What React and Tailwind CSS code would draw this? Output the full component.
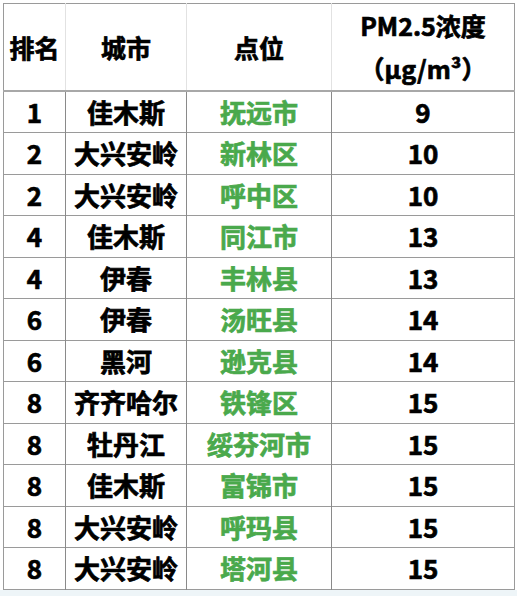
import React from "react";

const rows = [
  ["1", "佳木斯", "抚远市", "9"],
  ["2", "大兴安岭", "新林区", "10"],
  ["2", "大兴安岭", "呼中区", "10"],
  ["4", "佳木斯", "同江市", "13"],
  ["4", "伊春", "丰林县", "13"],
  ["6", "伊春", "汤旺县", "14"],
  ["6", "黑河", "逊克县", "14"],
  ["8", "齐齐哈尔", "铁锋区", "15"],
  ["8", "牡丹江", "绥芬河市", "15"],
  ["8", "佳木斯", "富锦市", "15"],
  ["8", "大兴安岭", "呼玛县", "15"],
  ["8", "大兴安岭", "塔河县", "15"],
];

export default function App() {
  return (
    <div
      className="flex flex-col w-[517px] h-[596px] bg-white overflow-hidden"
      style={{ fontFamily: '"Noto Sans CJK SC", "Noto Sans", sans-serif' }}
    >
      <div className="pl-[3px] pt-[3px]">
        <table className="border-collapse w-[511px] table-fixed border border-[#9a9a9a] font-bold text-black [-webkit-text-stroke:0.7px_currentColor]">
          <colgroup>
            <col className="w-[62px]" />
            <col className="w-[121px]" />
            <col className="w-[145px]" />
            <col className="w-[183px]" />
          </colgroup>
          <thead>
            <tr className="h-[86px] border-b-2 border-[#a8a8a8]">
              <th className="border-r border-[#e2e2e2] text-[25px] leading-none p-0">排名</th>
              <th className="border-r border-[#e2e2e2] text-[25px] leading-none p-0">城市</th>
              <th className="border-r border-[#e2e2e2] text-[25px] leading-none p-0">点位</th>
              <th className="text-[25px] leading-[43px] p-0">
                <div>PM2.5浓度</div>
                <div>（μg/m³）</div>
              </th>
            </tr>
          </thead>
          <tbody>
            {rows.map((r, i) => (
              <tr key={i} className="h-[41.5px] border-b border-[#9a9a9a]">
                <td className="border-r border-[#8a8a8a] text-center text-[26px] leading-none p-0">{r[0]}</td>
                <td className="border-r border-[#8a8a8a] text-center text-[26px] leading-none p-0">{r[1]}</td>
                <td className="border-r border-[#8a8a8a] text-center text-[26px] leading-none p-0 text-[#4aa94c]">{r[2]}</td>
                <td className="text-center text-[26px] leading-none p-0">{r[3]}</td>
              </tr>
            ))}
          </tbody>
        </table>
      </div>
      <div className="flex-1" />
      <div className="h-[6px] bg-[#eef5f8]" />
    </div>
  );
}
